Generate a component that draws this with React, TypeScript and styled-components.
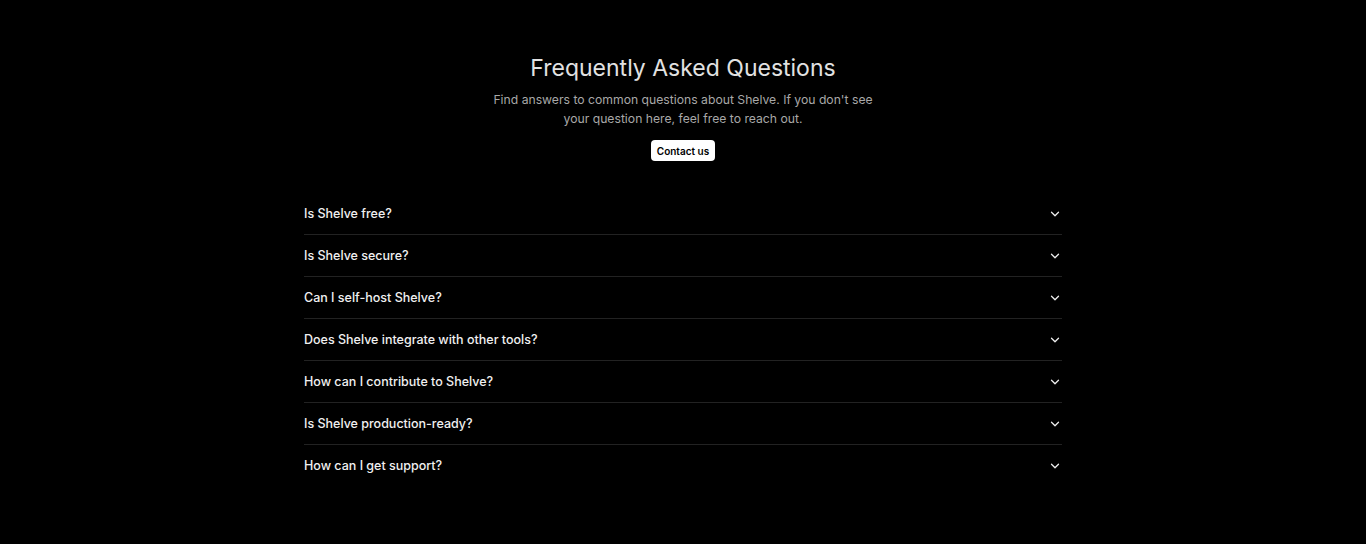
import React from 'react'
import styled, { createGlobalStyle } from 'styled-components'

const GlobalStyle = createGlobalStyle`
  html, body {
    margin: 0;
    padding: 0;
    background: #000;
  }
  body {
    font-family: Inter, 'Noto Sans', sans-serif;
    color: #fff;
    -webkit-font-smoothing: antialiased;
  }
`

const Page = styled.main`
  min-height: 544px;
  background: #000;
  display: flex;
  flex-direction: column;
  align-items: center;
  padding-top: 52px;
  box-sizing: border-box;
`

const Header = styled.header`
  display: flex;
  flex-direction: column;
  align-items: center;
  text-align: center;
`

const Title = styled.h2`
  margin: 0;
  font-size: 23px;
  font-weight: 400;
  line-height: 32px;
  color: #e2e2e2;
`

const Subtitle = styled.p`
  margin: 6px 0 0;
  max-width: 390px;
  font-size: 12.2px;
  line-height: 19px;
  color: #a8a8a8;
`

const ContactButton = styled.button`
  margin-top: 12px;
  height: 21px;
  padding: 0 6px;
  border: none;
  border-radius: 4px;
  background: #fff;
  color: #000;
  font-family: inherit;
  font-size: 10px;
  font-weight: 600;
  cursor: pointer;
`

const List = styled.ul`
  list-style: none;
  margin: 32px 0 0;
  padding: 0;
  width: 758px;
`

const Item = styled.li`
  border-bottom: 1px solid #222;
  &:last-child {
    border-bottom: none;
  }
`

const Question = styled.button`
  width: 100%;
  height: 41px;
  padding: 0;
  display: flex;
  align-items: center;
  justify-content: space-between;
  background: transparent;
  border: none;
  color: #f0f0f0;
  font-family: inherit;
  font-size: 12.5px;
  font-weight: 500;
  cursor: pointer;
  text-align: left;
`

const Chevron = () => (
  <svg width="14" height="14" viewBox="0 0 24 24" fill="none" stroke="#eee" strokeWidth="2.2" strokeLinecap="round" strokeLinejoin="round">
    <path d="m6 9 6 6 6-6" />
  </svg>
)

const questions = [
  'Is Shelve free?',
  'Is Shelve secure?',
  'Can I self-host Shelve?',
  'Does Shelve integrate with other tools?',
  'How can I contribute to Shelve?',
  'Is Shelve production-ready?',
  'How can I get support?',
]

export default function App() {
  return (
    <Page>
      <GlobalStyle />
      <Header>
        <Title>Frequently Asked Questions</Title>
        <Subtitle>
          Find answers to common questions about Shelve. If you don't see your question here, feel free to reach out.
        </Subtitle>
        <ContactButton>Contact us</ContactButton>
      </Header>
      <List>
        {questions.map((q) => (
          <Item key={q}>
            <Question>
              {q}
              <Chevron />
            </Question>
          </Item>
        ))}
      </List>
    </Page>
  )
}
